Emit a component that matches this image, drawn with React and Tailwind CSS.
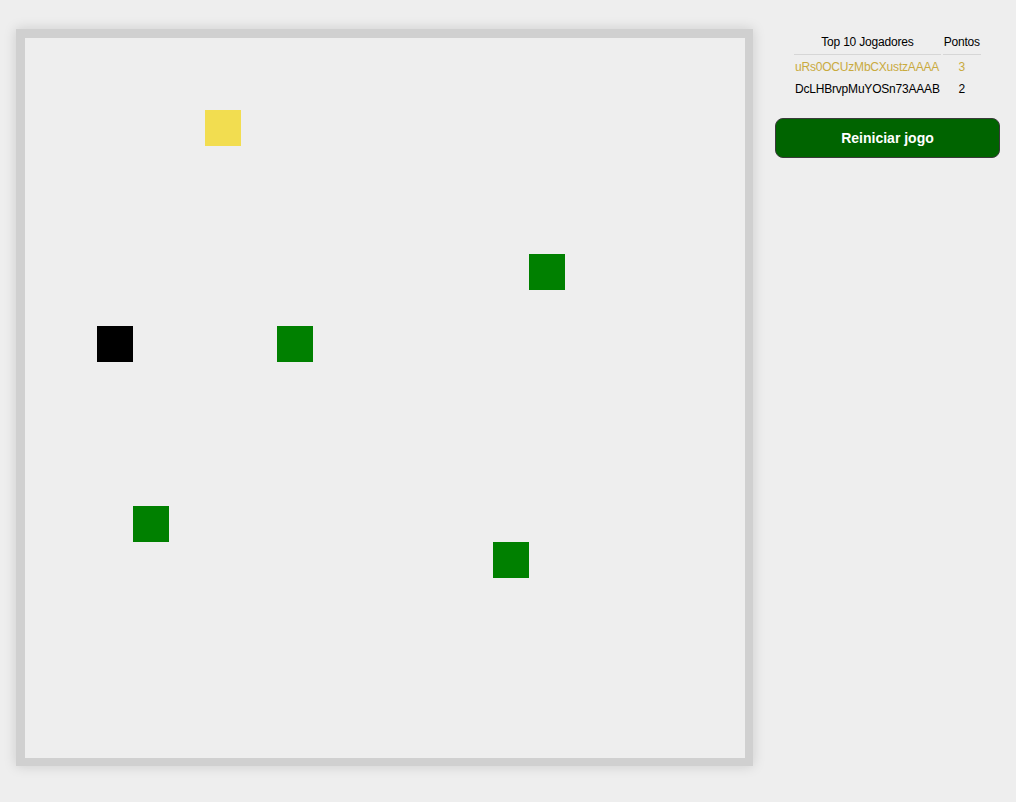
import React from "react";

const cells = [
  { x: 5, y: 2, c: "bg-[#f2dd50]" },
  { x: 14, y: 6, c: "bg-[#008000]" },
  { x: 2, y: 8, c: "bg-[#000000]" },
  { x: 7, y: 8, c: "bg-[#008000]" },
  { x: 3, y: 13, c: "bg-[#008000]" },
  { x: 13, y: 14, c: "bg-[#008000]" },
];

export default function App() {
  return (
    <div
      className="flex w-full h-[802px] bg-[#eeeeee] text-black"
      style={{ fontFamily: '"Liberation Sans", Arial, sans-serif' }}
    >
      <div className="ml-4 mt-[29px] self-start border-t-[9px] border-l-[9px] border-r-8 border-b-8 border-[#d0d0d0] shadow-[0_0_12px_rgba(0,0,0,0.15)]">
        <div className="relative w-[720px] h-[720px] bg-[#eeeeee]">
          {cells.map((s, i) => (
            <div
              key={i}
              className={`absolute w-9 h-9 ${s.c}`}
              style={{ left: s.x * 36, top: s.y * 36 }}
            />
          ))}
        </div>
      </div>
      <div className="ml-[22px] mt-[27px] w-[225px] flex flex-col items-start">
        <table className="ml-[17px] border-separate border-spacing-[2px] text-[12px] tracking-[-0.2px]">
          <thead>
            <tr>
              <th className="h-[26px] px-[1px] font-normal border-b border-[#d6d6d6] text-center">
                Top 10 Jogadores
              </th>
              <th className="h-[26px] px-[1px] font-normal border-b border-[#d6d6d6] text-center">
                Pontos
              </th>
            </tr>
          </thead>
          <tbody>
            <tr className="text-[#c9aa3e]">
              <td className="h-5 px-[1px]">uRs0OCUzMbCXustzAAAA</td>
              <td className="h-5 px-[1px] text-center">3</td>
            </tr>
            <tr>
              <td className="h-5 px-[1px]">DcLHBrvpMuYOSn73AAAB</td>
              <td className="h-5 px-[1px] text-center">2</td>
            </tr>
          </tbody>
        </table>
        <button className="mt-[17px] w-[225px] h-10 rounded-lg border border-[#3a3a3a] bg-[#006400] text-white font-bold text-[14px]">
          Reiniciar jogo
        </button>
      </div>
    </div>
  );
}
